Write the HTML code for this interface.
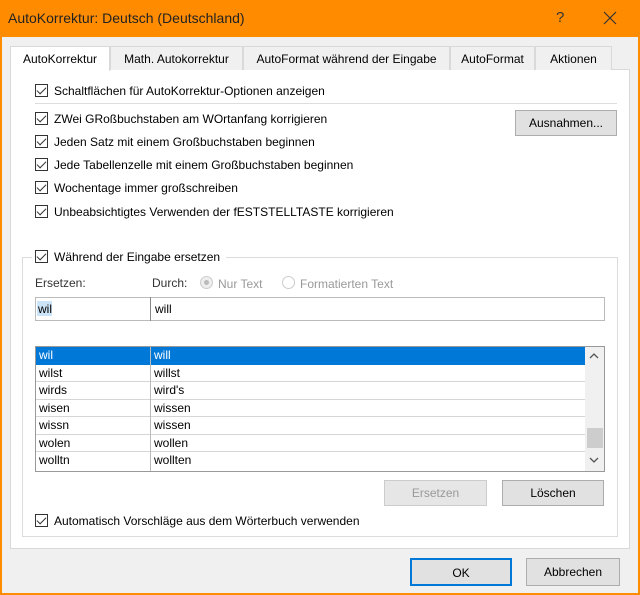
<!DOCTYPE html><html><head><style>
*{box-sizing:border-box}body{margin:0;width:640px;height:595px;background:#ff8c00;font-family:"Liberation Sans",sans-serif;font-size:12px;color:#000;overflow:hidden;position:relative}
.a{position:absolute}
.body{left:2px;top:37px;width:636px;height:556px;background:#f0f0f0}
.cb{position:absolute;width:13px;height:13px;border:1px solid #333;background:#fff}
.cb:after{content:"";position:absolute;left:3px;top:0px;width:4px;height:8px;border:solid #333;border-width:0 1.5px 1.5px 0;transform:rotate(45deg)}
.t{position:absolute;white-space:nowrap}
.tab{position:absolute;top:46px;height:24px;border:1px solid #d9d9d9;border-bottom:none;background:#f0f0f0;text-align:center;line-height:24px;font-size:12px}
.btn{position:absolute;border:1px solid #adadad;background:#e1e1e1;text-align:center;font-size:12px}
.row{position:absolute;left:36px;width:549px;height:17.5px;border-bottom:1px solid #d5d5d5;font-size:12px;line-height:17px}
.row span{position:absolute;left:3px}.row span+span{left:118px}
</style></head><body>
<div class="t" style="left:8px;top:10px;font-size:14px;color:#222">AutoKorrektur: Deutsch (Deutschland)</div>
<div class="t" style="left:556px;top:9px;font-size:15px;color:#333">?</div>
<svg class="a" style="left:603px;top:11px" width="14" height="14"><path d="M1 1L13 13M13 1L1 13" stroke="#333" stroke-width="1.2"/></svg>
<div class="a body"></div>
<div class="a" style="left:10px;top:69px;width:620px;height:480px;background:#fff;border:1px solid #d9d9d9"></div>
<div class="tab" style="left:10px;width:100px;background:#fff;height:25px">AutoKorrektur</div>
<div class="tab" style="left:110px;width:133px">Math. Autokorrektur</div>
<div class="tab" style="left:243px;width:207px">AutoFormat während der Eingabe</div>
<div class="tab" style="left:450px;width:85px">AutoFormat</div>
<div class="tab" style="left:535px;width:77px">Aktionen</div>
<div class="cb" style="left:35px;top:84px"></div><div class="t" style="left:54px;top:84px">Schaltflächen für AutoKorrektur-Optionen anzeigen</div>
<div class="a" style="left:35px;top:103px;width:582px;height:1px;background:#ddd"></div>
<div class="cb" style="left:35px;top:112px"></div><div class="t" style="left:54px;top:112px">ZWei GRoßbuchstaben am WOrtanfang korrigieren</div>
<div class="cb" style="left:35px;top:135px"></div><div class="t" style="left:54px;top:135px">Jeden Satz mit einem Großbuchstaben beginnen</div>
<div class="cb" style="left:35px;top:158px"></div><div class="t" style="left:54px;top:158px">Jede Tabellenzelle mit einem Großbuchstaben beginnen</div>
<div class="cb" style="left:35px;top:181px"></div><div class="t" style="left:54px;top:181px">Wochentage immer großschreiben</div>
<div class="cb" style="left:35px;top:205px"></div><div class="t" style="left:54px;top:205px">Unbeabsichtigtes Verwenden der fESTSTELLTASTE korrigieren</div>
<div class="btn" style="left:515px;top:110px;width:102px;height:26px;line-height:24px">Ausnahmen...</div>
<div class="a" style="left:22px;top:257px;width:596px;height:280px;border:1px solid #dcdcdc"></div>
<div class="a" style="left:32px;top:248px;width:194px;height:18px;background:#fff"></div>
<div class="cb" style="left:35px;top:250px"></div><div class="t" style="left:54px;top:250px">Während der Eingabe ersetzen</div>
<div class="t" style="left:35px;top:276px;color:#333">Ersetzen:</div>
<div class="t" style="left:152px;top:276px;color:#333">Durch:</div>
<div class="a" style="left:200px;top:276px;width:13px;height:13px;border-radius:50%;border:1px solid #ccc;background:#eee"><div class="a" style="left:3px;top:3px;width:5px;height:5px;border-radius:50%;background:#bbb"></div></div>
<div class="t" style="left:218px;top:277px;color:#999">Nur Text</div>
<div class="a" style="left:282px;top:276px;width:13px;height:13px;border-radius:50%;border:1px solid #ccc"></div>
<div class="t" style="left:300px;top:277px;color:#999">Formatierten Text</div>
<div class="a" style="left:35px;top:297px;width:570px;height:24px;border:1px solid #bbb;background:#fff"></div>
<div class="a" style="left:150px;top:297px;width:1px;height:24px;background:#888"></div>
<div class="a" style="left:37px;top:301px;width:15px;height:15px;background:#cce4f7"></div>
<div class="t" style="left:38px;top:302px">wil</div><div class="t" style="left:155px;top:302px">will</div>
<div class="a" style="left:35px;top:346px;width:570px;height:126px;border:1px solid #999;background:#fff"></div>
<div class="row" style="top:347px;background:#0078d7;color:#fff;border-bottom-color:#0078d7"><span>wil</span><span>will</span></div>
<div class="row" style="top:364.5px"><span>wilst</span><span>willst</span></div>
<div class="row" style="top:382px"><span>wirds</span><span>wird's</span></div>
<div class="row" style="top:399.5px"><span>wisen</span><span>wissen</span></div>
<div class="row" style="top:417px"><span>wissn</span><span>wissen</span></div>
<div class="row" style="top:434.5px"><span>wolen</span><span>wollen</span></div>
<div class="row" style="top:452px;border-bottom:none"><span>wolltn</span><span>wollten</span></div>
<div class="a" style="left:150px;top:347px;width:1px;height:124px;background:#bbb"></div>
<div class="a" style="left:585px;top:347px;width:19px;height:124px;background:#f0f0f0"></div>
<svg class="a" style="left:589px;top:352px" width="10" height="8"><path d="M1 6L5 2L9 6" stroke="#555" stroke-width="1.3" fill="none"/></svg>
<div class="a" style="left:587px;top:428px;width:16px;height:20px;background:#cdcdcd"></div>
<svg class="a" style="left:589px;top:456px" width="10" height="8"><path d="M1 2L5 6L9 2" stroke="#555" stroke-width="1.3" fill="none"/></svg>
<div class="btn" style="left:384px;top:480px;width:103px;height:26px;line-height:24px;color:#999;border-color:#ccc;background:#e6e6e6">Ersetzen</div>
<div class="btn" style="left:502px;top:480px;width:102px;height:26px;line-height:24px">Löschen</div>
<div class="cb" style="left:35px;top:514px"></div><div class="t" style="left:54px;top:514px">Automatisch Vorschläge aus dem Wörterbuch verwenden</div>
<div class="btn" style="left:410px;top:558px;width:102px;height:28px;line-height:26px;border:2px solid #0078d7">OK</div>
<div class="btn" style="left:526px;top:558px;width:94px;height:28px;line-height:26px">Abbrechen</div>
</body></html>
